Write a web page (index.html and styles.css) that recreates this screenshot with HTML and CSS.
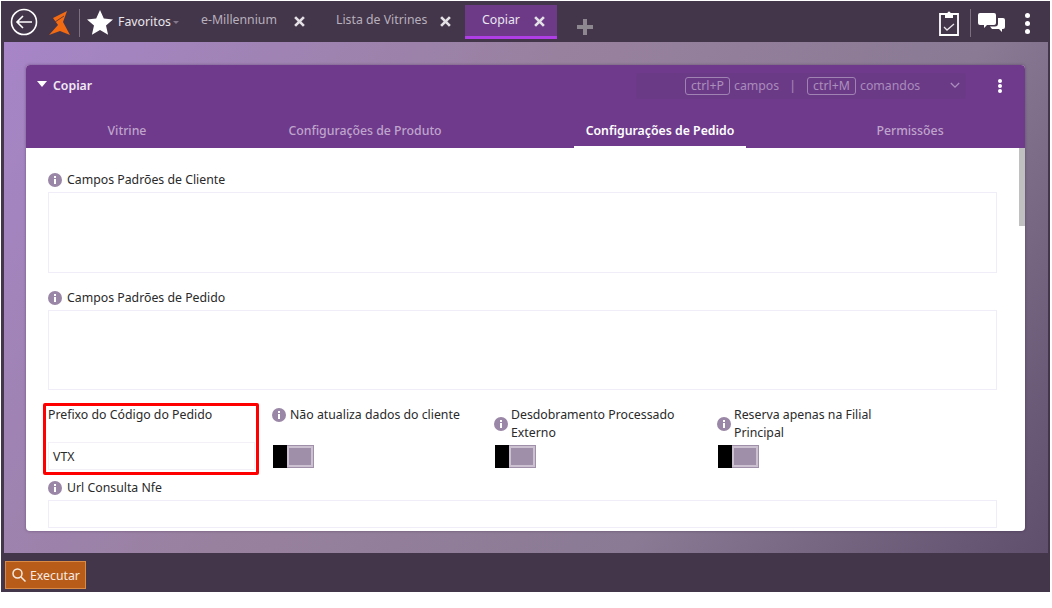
FILE: index.html
```html
<!DOCTYPE html>
<html lang="pt">
<head>
<meta charset="utf-8">
<title>Copiar</title>
<link rel="stylesheet" href="styles.css">
</head>
<body>
<div class="app">
  <header class="topbar">
    <svg class="ic-back" viewBox="0 0 28 28"><circle cx="14" cy="14" r="12.5"/><path d="M22 14H7M13 8l-6 6 6 6"/></svg>
    <svg class="ic-logo" viewBox="0 0 22 25"><path fill="#f26a12" d="M19 1 L5 8 L10 15 L1 25 L12 21 L22 25 L15 12 Z"/><path fill="none" stroke="#6d3b34" stroke-width="1" d="M7 12 L16 6"/></svg>
    <span class="vsep sep-left"></span>
    <svg class="ic-star" viewBox="0 0 26 25"><path fill="#fff" d="M13 0l3.800 8.600 9.200.9-7 6.100 2.100 9.200-8.100-4.800-8.100 4.800 2.100-9.200-7-6.100 9.200-.9z"/></svg>
    <span class="fav">Favoritos</span><span class="fav-caret"></span>
    <div class="tab tab-a"><span>e-Millennium</span><svg class="x" viewBox="0 0 10 10"><path d="M1 1l8 8M9 1l-8 8"/></svg></div>
    <div class="tab tab-b"><span>Lista de Vitrines</span><svg class="x" viewBox="0 0 10 10"><path d="M1 1l8 8M9 1l-8 8"/></svg></div>
    <div class="tab tab-on"><span>Copiar</span><svg class="x" viewBox="0 0 10 10"><path d="M1 1l8 8M9 1l-8 8"/></svg></div>
    <svg class="ic-plus" viewBox="0 0 16 16"><path fill="#8d8890" d="M6 0h4v6h6v4h-6v6H6v-6H0V6h6z"/></svg>
    <div class="tools">
      <svg class="ic-clip" viewBox="0 0 20 26"><path fill="none" stroke="#fff" stroke-width="1.800" d="M1 4h18v21H1z"/><path fill="#fff" d="M6 3h2.500a1.500 1.500 0 0 1 3 0H14v5H6z"/><path fill="none" stroke="#e8e4ea" stroke-width="1.300" d="M5 17l3 3 7-6"/></svg>
      <span class="vsep sep-right"></span>
      <svg class="ic-chat" viewBox="0 0 27 19"><path fill="#fff" d="M2 0h14a2 2 0 0 1 2 2v8a2 2 0 0 1-2 2H9l-3 3v-3H2a2 2 0 0 1-2-2V2a2 2 0 0 1 2-2z"/><path fill="#fff" d="M20 5h5a2 2 0 0 1 2 2v7a2 2 0 0 1-2 2h-1v3l-3-3h-7l-2-2.500h5a3 3 0 0 0 3-3z"/></svg>
      <span class="dots dots-top"><i></i><i></i><i></i></span>
    </div>
  </header>

  <main class="stage">
    <section class="card">
      <div class="card-head">
        <span class="tri"></span>
        <span class="card-title">Copiar</span>
        <div class="cmd">
          <kbd class="key key-p">ctrl+P</kbd><span class="cmd-t">campos</span><span class="cmd-bar">|</span>
          <kbd class="key key-m">ctrl+M</kbd><span class="cmd-t">comandos</span>
          <svg class="chev" viewBox="0 0 12 8"><path d="M1 1l5 5 5-5"/></svg>
        </div>
        <span class="dots dots-card"><i></i><i></i><i></i></span>
      </div>
      <nav class="tabs">
        <a>Vitrine</a>
        <a>Configurações de Produto</a>
        <a class="on"><span>Configurações de Pedido</span></a>
        <a>Permissões</a>
      </nav>
      <div class="body">
        <span class="scroll"></span>
        <div class="lbl"><svg class="info" viewBox="0 0 14 14"><circle cx="7" cy="7" r="7"/><path d="M6 6h2v5H6zM6 3h2v2H6z"/></svg>Campos Padrões de Cliente</div>
        <div class="box"></div>
        <div class="lbl lbl-next"><svg class="info" viewBox="0 0 14 14"><circle cx="7" cy="7" r="7"/><path d="M6 6h2v5H6zM6 3h2v2H6z"/></svg>Campos Padrões de Pedido</div>
        <div class="box box-b"></div>
        <div class="row">
          <div class="prefix">
            <div class="prefix-l">Prefixo do Código do Pedido</div>
            <div class="prefix-i">VTX</div>
          </div>
          <div class="opt opt-1">
            <div class="opt-l"><svg class="info" viewBox="0 0 14 14"><circle cx="7" cy="7" r="7"/><path d="M6 6h2v5H6zM6 3h2v2H6z"/></svg><span>Não atualiza dados do cliente</span></div>
            <div class="toggle"><i></i><b></b></div>
          </div>
          <div class="opt opt-2">
            <div class="opt-l"><svg class="info" viewBox="0 0 14 14"><circle cx="7" cy="7" r="7"/><path d="M6 6h2v5H6zM6 3h2v2H6z"/></svg><span>Desdobramento Processado Externo</span></div>
            <div class="toggle"><i></i><b></b></div>
          </div>
          <div class="opt opt-3">
            <div class="opt-l"><svg class="info" viewBox="0 0 14 14"><circle cx="7" cy="7" r="7"/><path d="M6 6h2v5H6zM6 3h2v2H6z"/></svg><span>Reserva apenas na Filial Principal</span></div>
            <div class="toggle"><i></i><b></b></div>
          </div>
        </div>
        <div class="lbl lbl-url"><svg class="info" viewBox="0 0 14 14"><circle cx="7" cy="7" r="7"/><path d="M6 6h2v5H6zM6 3h2v2H6z"/></svg>Url Consulta Nfe</div>
        <div class="box box-url"></div>
      </div>
    </section>
  </main>

  <footer class="foot">
    <button class="run"><svg viewBox="0 0 14 14"><circle cx="5.500" cy="5.500" r="4.500"/><path d="M9 9l4.500 4.500"/></svg>Executar</button>
  </footer>
</div>
</body>
</html>
```
FILE: styles.css
```css
* { box-sizing: border-box; }
html, body { margin: 0; height: 100%; background: #fff; overflow: hidden; }
body { font-family: "Noto Sans", "Open Sans", sans-serif; font-size: 12.300px; color: #2a2a2a; }

.app { width: 1049px; height: 591px; margin: 1px 0 0 1px; background: #44364a; display: flex; flex-direction: column; }

/* top bar */
.topbar { height: 41px; flex: none; display: flex; align-items: flex-start; color: #b7b0bd; }
.ic-back { width: 28px; height: 28px; margin: 7px 0 0 9px; fill: none; stroke: #fff; stroke-width: 1.600; flex: none; }
.ic-logo { width: 22px; height: 25px; margin: 9px 0 0 10px; flex: none; }
.vsep { width: 1px; background: #7b7080; flex: none; }
.sep-left { height: 28px; margin: 8px 0 0 9px; }
.ic-star { width: 26px; height: 25px; margin: 9px 0 0 7px; flex: none; }
.fav { color: #e9e6ec; margin: 12px 0 0 5px; line-height: 18px; width: 53px; white-space: nowrap; }
.fav-caret { width: 0; height: 0; margin: 20px 0 0 2px; border: 3.500px solid transparent; border-top: 3px solid #85788c; border-bottom: 0; }
.tab { display: flex; height: 34px; margin-top: 4px; align-items: flex-start; white-space: nowrap; }
.tab span { line-height: 18px; margin-top: 6px; }
.x { width: 11px; height: 11px; margin-top: 11px; flex: none; fill: none; stroke: #e4e1e6; stroke-width: 2.400; }
.tab-a { margin-left: 22px; width: 135px; }
.tab-a span { width: 93px; }
.tab-b { width: 129px; }
.tab-b span { width: 104px; }
.tab-on { width: 92px; padding-left: 17px; background: #6c3a87; border-bottom: 3px solid #b03ee6; color: #ebe6ef; }
.tab-on span { width: 52px; }
.ic-plus { width: 16px; height: 16px; margin: 18px 0 0 20px; flex: none; }
.tools { display: flex; margin-left: auto; align-items: flex-start; }
.ic-clip { width: 20px; height: 26px; margin-top: 9px; flex: none; }
.sep-right { height: 28px; margin: 8px 0 0 11px; }
.ic-chat { width: 27px; height: 19px; margin: 12px 0 0 7px; flex: none; }
.dots { display: flex; flex-direction: column; align-items: center; }
.dots i { display: block; border-radius: 50%; background: #fff; }
.dots-top { margin: 12px 20px 0 20px; gap: 3px; }
.dots-top i { width: 5px; height: 5px; }

/* stage */
.stage { height: 511px; flex: none; margin: 0 2px 0 3px; padding: 23px 23px 22px 22px; background: linear-gradient(125deg, #a785c8 0%, #98819f 40%, #8a7a94 70%, #5f4e6c 100%); }
.card { height: 466px; border-radius: 4px; background: #fff; display: flex; flex-direction: column; overflow: hidden; box-shadow: 0 0 3px rgba(40,20,50,.4); }
.card-head { height: 40px; flex: none; background: #6f3a8b; display: flex; align-items: center; padding-left: 11px; color: #efe9f3; }
.tri { width: 0; height: 0; border: 5px solid transparent; border-top: 6px solid #fff; border-bottom: 0; margin-top: -2px; }
.card-title { margin-left: 6px; font-weight: 600; line-height: 18px; width: 39px; margin-top: 1px; }
.cmd { margin-left: 544px; margin-top: 1px; width: 330px; height: 26px; flex: none; border-radius: 3px; background: #6b3a87; display: flex; align-items: center; padding-left: 49px; color: #a98cbb; white-space: nowrap; }
.key { font-family: inherit; font-size: 12.300px; border: 1px solid #a083b3; border-radius: 3px; height: 18px; line-height: 16px; text-align: center; color: #ab90bc; flex: none; }
.key-p { width: 45px; }
.key-m { width: 49px; }
.cmd-t { margin-left: 4px; }
.cmd-bar { margin: 0 11px 0 10px; }
.chev { width: 10px; height: 7px; margin-left: 30px; flex: none; fill: none; stroke: #a98cbb; stroke-width: 1.600; }
.dots-card { margin: 1px 0 0 32px; gap: 1px; }
.dots-card i { width: 4px; height: 4px; }

.tabs { height: 43px; flex: none; background: #6f3a8b; display: grid; grid-template-columns: 202px 274px 316px 184px; color: #bfa5cd; }
.tabs a { display: flex; justify-content: center; padding-top: 17px; line-height: 18px; font-weight: 500; white-space: nowrap; }
.tabs a.on { color: #fff; font-weight: 600; padding-top: 0; }
.tabs a.on span { width: 172px; height: 43px; padding-top: 17px; text-align: center; border-bottom: 2px solid #fff; }

/* form */
.body { position: relative; flex: 1; min-height: 0; padding: 23px 28px 0 22px; overflow: hidden; }
.scroll { position: absolute; right: 0; top: 0; width: 6px; height: 78px; background: #c0c0c0; }
.lbl { display: flex; align-items: center; gap: 5px; height: 18px; line-height: 18px; }
.info { width: 14px; height: 14px; flex: none; fill: #9a86a6; }
.info path { fill: #fff; }
.box { height: 81px; margin-top: 3px; border: 1px solid #f0ecf8; background: #fff; }
.lbl-next { margin-top: 16px; }
.box-b { height: 80px; }
.row { display: flex; margin-top: 13px; height: 72px; align-items: flex-start; }
.prefix { width: 216px; height: 72px; margin-left: -5px; flex: none; border: 3px solid #f00; border-radius: 2px; padding: 0 1px 0 2px; display: flex; flex-direction: column; }
.prefix-l { line-height: 18px; height: 36px; }
.prefix-i { height: 28px; border: 1px solid #f4f0f8; padding: 1px 0 0 4px; line-height: 26px; }
.opt { flex: none; }
.opt-l { display: flex; align-items: center; gap: 3px; line-height: 18px; min-height: 39px; padding-top: 3px; }
.opt-1 { width: 222px; margin-left: 13px; }
.opt-1 .opt-l { align-items: flex-start; gap: 4px; }
.opt-2 { width: 223px; }
.opt-3 { width: 180px; }
.opt-2 .opt-l span, .opt-3 .opt-l span { width: 175px; }
.opt-1 .info { margin-top: 2px; }
.toggle { display: flex; width: 41px; height: 23px; margin: 3px 0 0 1px; }
.toggle i { width: 14px; height: 23px; background: #000; flex: none; }
.toggle b { flex: 1; background: #a08fa8; border: 1px solid #a08fa8; border-left: 0; box-shadow: inset 0 0 0 2px #cbc1d0; }
.lbl-url { margin-top: 4px; }
.box-url { height: 28px; margin-top: 3px; }

/* footer */
.foot { flex: 1; margin-left: 3px; padding: 8px 0 0 1px; }
.run { display: flex; align-items: center; gap: 4px; width: 81px; height: 28px; padding: 0 0 0 6px; background: #b85c1a; border: 1px solid #d98a45; color: #f5ebe2; font: 12.300px "Noto Sans", sans-serif; }
.run svg { width: 14px; height: 14px; fill: none; stroke: #f5ebe2; stroke-width: 1.500; flex: none; }
```
